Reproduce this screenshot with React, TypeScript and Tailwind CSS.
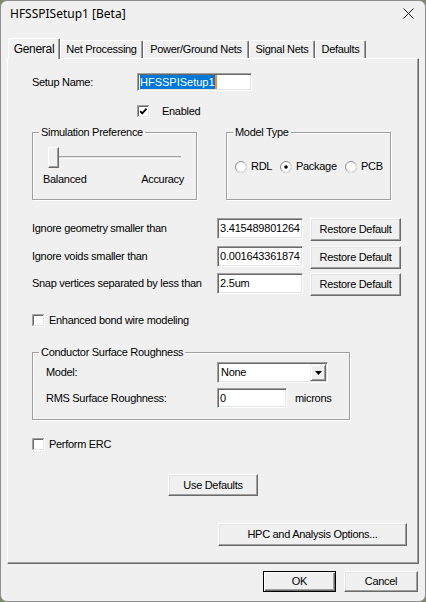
import React from "react";

const font = { fontFamily: '"Liberation Sans", Arial, sans-serif' };

function CheckBox({ checked }: { checked?: boolean }) {
  return (
    <svg width="13" height="13" viewBox="0 0 13 13" className="shrink-0">
      <rect x="0" y="0" width="13" height="13" fill="#fff" />
      <path d="M0.5 12.5V0.5H12.5" stroke="#a0a0a0" fill="none" />
      <path d="M1.5 11.5V1.5H11.5" stroke="#696969" fill="none" />
      <path d="M0 12.5H12.5V0" stroke="#fff" fill="none" />
      <path d="M1 11.5H11.5V1" stroke="#e3e3e3" fill="none" />
      {checked && (
        <polyline points="3.2,6.2 5.2,8.4 9.6,3.6" stroke="#000" strokeWidth="1.8" fill="none" />
      )}
    </svg>
  );
}

function Radio({ checked }: { checked?: boolean }) {
  return (
    <svg width="12" height="12" viewBox="0 0 12 12" className="shrink-0">
      <circle cx="6" cy="6" r="5.5" fill="#fff" stroke="#8c8c8c" />
      <path d="M9.9 2.1 A5.5 5.5 0 0 1 2.1 9.9" stroke="#e8e8e8" fill="none" />
      {checked && <circle cx="6" cy="6" r="1.8" fill="#000" />}
    </svg>
  );
}

function Button({ children, className = "", isDefault = false }: { children: React.ReactNode; className?: string; isDefault?: boolean }) {
  const edge = isDefault
    ? "border border-black shadow-[inset_1px_1px_0_#fff,inset_-1px_-1px_0_#696969,inset_-2px_-2px_0_#a0a0a0]"
    : "border border-t-white border-l-white border-r-[#696969] border-b-[#696969] shadow-[inset_-1px_-1px_0_#a0a0a0,inset_1px_1px_0_#e3e3e3]";
  return (
    <div className={`flex items-center justify-center bg-[#f0f0f0] leading-[13px] text-black ${edge} ${className}`}>
      {children}
    </div>
  );
}

function TextBox({ value, className = "" }: { value: string; className?: string }) {
  return (
    <div className={`flex items-center overflow-hidden whitespace-nowrap bg-white pl-[2px] leading-[13px] tracking-[-0.2px] border border-t-[#a0a0a0] border-l-[#a0a0a0] border-b-white border-r-white shadow-[inset_1px_1px_0_#696969,inset_-1px_-1px_0_#e3e3e3] ${className}`}>
      {value}
    </div>
  );
}

function Group({ title, className = "", children }: { title: string; className?: string; children?: React.ReactNode }) {
  return (
    <fieldset className={`border border-[#a0a0a0] shadow-[1px_1px_0_#fff,inset_1px_1px_0_#fff] ${className}`}>
      <legend className="ml-[6px] px-[2px] leading-[14px]">{title}</legend>
      {children}
    </fieldset>
  );
}

const tabs = [
  { name: "General", w: "w-[52px]", active: true },
  { name: "Net Processing", w: "w-[83px]" },
  { name: "Power/Ground Nets", w: "w-[106px]" },
  { name: "Signal Nets", w: "w-[66px]" },
  { name: "Defaults", w: "w-[51px]" },
];

const limits = [
  { label: "Ignore geometry smaller than", value: "3.415489801264", mt: "mt-[18px]" },
  { label: "Ignore voids smaller than", value: "0.001643361874", mt: "mt-[5px]" },
  { label: "Snap vertices separated by less than", value: "2.5um", mt: "mt-[4px]" },
];

export default function App() {
  return (
    <div className="w-[426px] h-[602px] bg-[#7d8a6a]" style={font}>
      <div className="w-[426px] h-[602px] bg-[#f0f0f0] border border-[#8f8f8f] rounded-[7px] overflow-hidden text-black text-[11px] tracking-[-0.3px]">
        {/* title bar */}
        <div className="h-[25px] flex items-center justify-between pl-[9px] pr-[11px]">
          <span className="text-[12px] tracking-normal" style={{ fontFamily: '"Noto Sans", "Open Sans", sans-serif' }}>
            HFSSPISetup1 [Beta]
          </span>
          <svg width="11" height="11" viewBox="0 0 11 11">
            <path d="M0.5 0.5L10.5 10.5M10.5 0.5L0.5 10.5" stroke="#1a1a1a" strokeWidth="1" />
          </svg>
        </div>

        {/* tabs */}
        <div className="mt-[12px] ml-[7px] h-[20px] flex items-end">
          {tabs.map((t) =>
            t.active ? (
              <div
                key={t.name}
                className={`${t.w} relative z-10 -mb-px h-[21px] flex items-center justify-center bg-[#f0f0f0] border-t border-l border-r border-t-white border-l-white border-r-[#696969] rounded-t-[2px] shadow-[inset_-1px_0_0_#a0a0a0] text-[12px]`}
              >
                {t.name}
              </div>
            ) : (
              <div
                key={t.name}
                className={`${t.w} h-[18px] flex items-center justify-center border-t border-l border-r border-t-white border-l-white border-r-[#696969] rounded-t-[2px] shadow-[inset_-1px_0_0_#a0a0a0]`}
              >
                {t.name}
              </div>
            )
          )}
        </div>

        {/* tab page */}
        <div className="ml-[6px] w-[412px] h-[506px] border border-t-white border-l-white border-r-[#696969] border-b-[#696969] shadow-[inset_-1px_-1px_0_#a0a0a0]">
          <div className="mt-[14px] flex items-center h-[18px]">
            <span className="ml-[24px] w-[105px]">Setup Name:</span>
            <div className="w-[115px] h-[18px] flex items-center bg-white pl-[2px] border border-t-[#a0a0a0] border-l-[#a0a0a0] border-b-white border-r-white shadow-[inset_1px_1px_0_#696969,inset_-1px_-1px_0_#e3e3e3]">
              <span className="bg-[#0078d7] text-white leading-[14px] tracking-normal">HFSSPISetup1</span>
              <span className="w-[2px] h-[14px] bg-[#ff8728]" />
            </div>
          </div>

          <div className="mt-[14px] ml-[129px] flex items-center gap-[12px] h-[13px]">
            <CheckBox checked />
            <span>Enabled</span>
          </div>

          <div className="mt-[7px] flex">
            <Group title="Simulation Preference" className="ml-[24px] w-[165px] h-[75px]">
              <div className="relative mt-[8px] ml-[15px] w-[133px] h-[21px]">
                <div className="absolute left-0 right-0 top-[9px] h-[3px] border-t border-t-[#a0a0a0] border-b border-b-white bg-[#e3e3e3]" />
                <div className="absolute left-0 top-0 w-[11px] h-[21px] bg-[#f0f0f0] border border-t-white border-l-white border-r-[#696969] border-b-[#696969] shadow-[inset_-1px_-1px_0_#a0a0a0]" />
              </div>
              <div className="mt-[5px] flex justify-between pl-[10px] pr-[12px] leading-[13px]">
                <span>Balanced</span>
                <span>Accuracy</span>
              </div>
            </Group>
            <Group title="Model Type" className="ml-[29px] w-[165px] h-[75px]">
              <div className="mt-[21px] pl-[8px] flex items-center leading-[13px]">
                <div className="w-[45px] flex items-center gap-[4px]">
                  <Radio />
                  <span>RDL</span>
                </div>
                <div className="w-[65px] flex items-center gap-[4px]">
                  <Radio checked />
                  <span>Package</span>
                </div>
                <div className="flex items-center gap-[4px]">
                  <Radio />
                  <span>PCB</span>
                </div>
              </div>
            </Group>
          </div>

          {limits.map((r) => (
            <div key={r.label} className={`${r.mt} flex items-start`}>
              <span className="ml-[24px] w-[185px] h-[21px] flex items-center">{r.label}</span>
              <TextBox value={r.value} className="w-[86px] h-[21px]" />
              <Button className="ml-[7px] w-[91px] h-[23px]">Restore Default</Button>
            </div>
          ))}

          <div className="mt-[18px] ml-[24px] flex items-center gap-[4px] h-[13px]">
            <CheckBox />
            <span>Enhanced bond wire modeling</span>
          </div>

          <Group title="Conductor Surface Roughness" className="mt-[18px] ml-[24px] w-[318px] h-[75px]">
            <div className="mt-[3px] flex items-center h-[21px] pl-[13px]">
              <span className="w-[171px]">Model:</span>
              <div className="w-[111px] h-[21px] flex items-center justify-between bg-white pl-[3px] border border-t-[#a0a0a0] border-l-[#a0a0a0] border-b-white border-r-white shadow-[inset_1px_1px_0_#696969,inset_-1px_-1px_0_#e3e3e3]">
                <span>None</span>
                <div className="mr-[1px] w-[16px] h-[17px] flex items-center justify-center bg-[#f0f0f0] border border-t-[#f0f0f0] border-l-[#f0f0f0] border-r-[#696969] border-b-[#696969] shadow-[inset_1px_1px_0_#fff,inset_-1px_-1px_0_#a0a0a0]">
                  <svg width="7" height="4" viewBox="0 0 7 4">
                    <path d="M0 0H7L3.5 4Z" fill="#000" />
                  </svg>
                </div>
              </div>
            </div>
            <div className="mt-[5px] flex items-center h-[20px] pl-[13px]">
              <span className="w-[171px]">RMS Surface Roughness:</span>
              <TextBox value="0" className="w-[70px] h-[20px]" />
              <span className="ml-[8px]">microns</span>
            </div>
          </Group>

          <div className="mt-[18px] ml-[24px] flex items-center gap-[4px] h-[13px]">
            <CheckBox />
            <span>Perform ERC</span>
          </div>

          <Button className="mt-[23px] mx-auto w-[90px] h-[22px]">Use Defaults</Button>

          <Button className="mt-[27px] ml-[210px] w-[189px] h-[23px]">HPC and Analysis Options...</Button>
        </div>

        <div className="mt-[7px] flex justify-end gap-[8px] pr-[7px]">
          <Button isDefault className="w-[73px] h-[21px]">OK</Button>
          <Button className="w-[74px] h-[21px]">Cancel</Button>
        </div>
      </div>
    </div>
  );
}
